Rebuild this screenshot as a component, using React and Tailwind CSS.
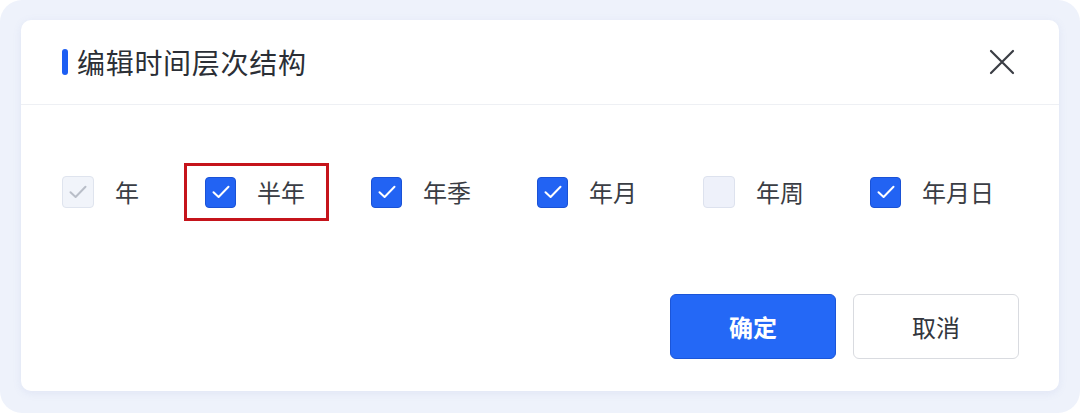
import React from "react";

const items = [
  { label: "年", state: "disabled" },
  { label: "半年", state: "checked", highlight: true },
  { label: "年季", state: "checked" },
  { label: "年月", state: "checked" },
  { label: "年周", state: "unchecked" },
  { label: "年月日", state: "checked" },
];

function Check({ color }) {
  return (
    <svg width="22" height="22" viewBox="0 0 22 22" fill="none">
      <path d="M3.5 11.2 L8.6 16 L18.5 5.8" stroke={color} strokeWidth="2" strokeLinecap="round" strokeLinejoin="round" />
    </svg>
  );
}

function Box({ state }) {
  if (state === "checked") {
    return (
      <div className="w-[31px] h-[31px] rounded-[4px] bg-[#2263f3] border border-[#1a52d6] flex items-center justify-center">
        <Check color="#ffffff" />
      </div>
    );
  }
  if (state === "disabled") {
    return (
      <div className="w-[32px] h-[32px] rounded-[4px] bg-[#f1f4fa] border border-[#dfe4ee] flex items-center justify-center">
        <Check color="#b9bec8" />
      </div>
    );
  }
  return <div className="w-[32px] h-[32px] rounded-[4px] bg-[#eef1fa] border border-[#dde2ee]" />;
}

export default function App() {
  return (
    <div className="w-[1080px] h-[413px] bg-white" style={{ fontFamily: '"Noto Sans CJK SC", "Noto Sans", sans-serif' }}>
      <div className="w-full h-full rounded-[22px] bg-[#eef2fb] pt-[20px] px-[21px]">
        <div className="w-[1038px] h-[371px] bg-white rounded-[10px] shadow-[0_2px_8px_rgba(120,140,200,0.12)] flex flex-col">
          <div className="h-[85px] border-b border-[#eef0f4] flex items-center justify-between pl-[41px] pr-[44px]">
            <div className="flex items-center gap-[9px]">
              <div className="w-[6px] h-[26px] rounded-full bg-[#1d5ef3]" />
              <span className="text-[28px] leading-none text-[#2b2f36] tracking-[0.7px]">编辑时间层次结构</span>
            </div>
            <svg width="26" height="26" viewBox="0 0 26 26" fill="none">
              <path d="M2 2 L24 24 M24 2 L2 24" stroke="#3a3d44" strokeWidth="2.2" strokeLinecap="round" />
            </svg>
          </div>
          <div className="flex items-center gap-[66px] pl-[41px] pt-[71px]">
            {items.map((it) => (
              <div key={it.label} className={it.highlight ? "relative" : ""}>
                <div className="flex items-center gap-[21px]">
                  <Box state={it.state} />
                  <span className="text-[24px] leading-none text-[#3a3d44]">{it.label}</span>
                </div>
                {it.highlight && (
                  <div className="absolute left-[-21px] top-[-14px] w-[145px] h-[58px] border-[3px] border-[#c5141b]" />
                )}
              </div>
            ))}
          </div>
          <div className="flex justify-end gap-[17px] pr-[40px] mt-auto mb-[32px]">
            <button className="w-[166px] h-[65px] rounded-[6px] bg-[#2468f6] border border-[#1b55d8] text-white text-[24px] font-bold">确定</button>
            <button className="w-[166px] h-[65px] rounded-[6px] bg-white border border-[#d9dbe0] text-[#33363d] text-[24px]">取消</button>
          </div>
        </div>
      </div>
    </div>
  );
}
